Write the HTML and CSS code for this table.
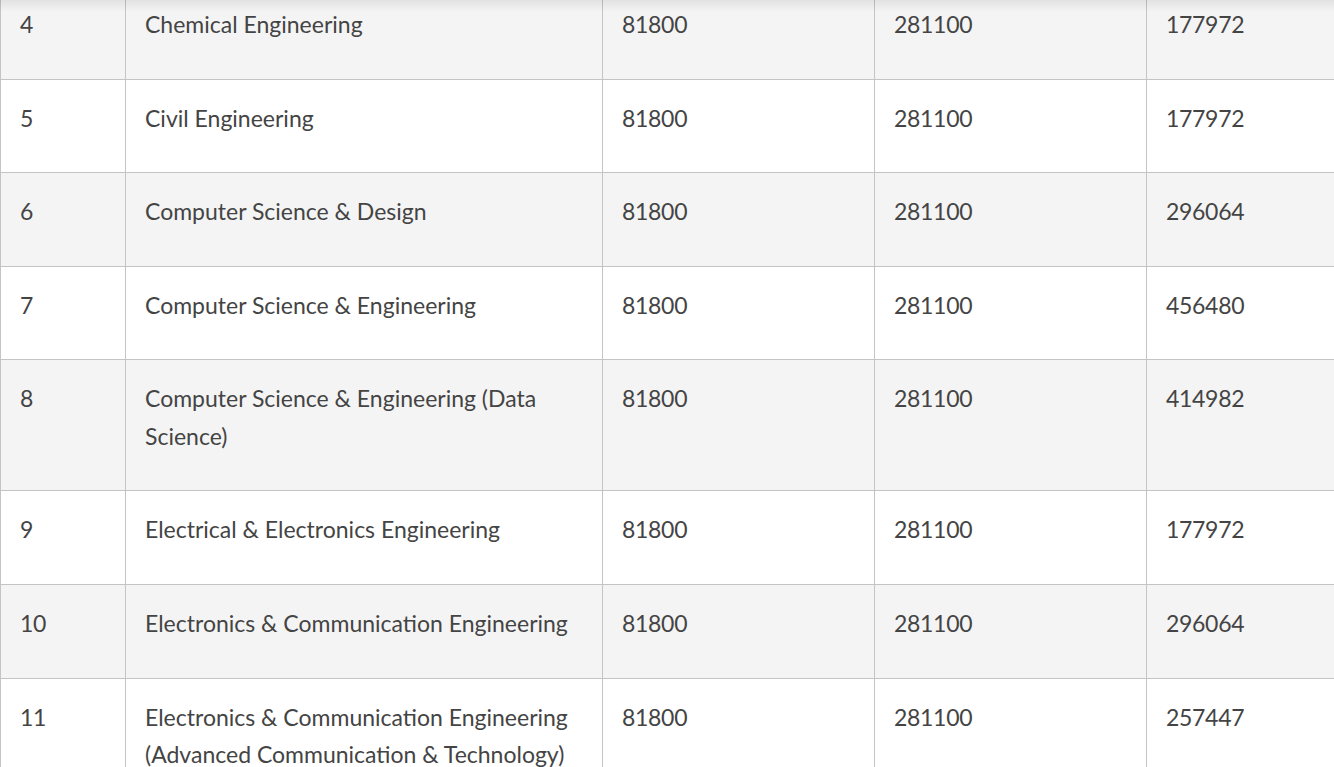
FILE: index.html
```html
<!DOCTYPE html>
<html>
<head>
<meta charset="utf-8">
<link rel="stylesheet" href="styles.css">
</head>
<body>
<div class="top-shadow"></div>
<div class="wrap">
<table class="fees">
<colgroup>
<col class="c1"><col class="c2"><col class="c3"><col class="c4"><col class="c5">
</colgroup>
<tbody>
<tr class="alt"><td>4</td><td class="name">Chemical Engineering</td><td>81800</td><td>281100</td><td>177972</td></tr>
<tr><td>5</td><td class="name">Civil Engineering</td><td>81800</td><td>281100</td><td>177972</td></tr>
<tr class="alt"><td>6</td><td class="name">Computer Science &amp; Design</td><td>81800</td><td>281100</td><td>296064</td></tr>
<tr><td>7</td><td class="name">Computer Science &amp; Engineering</td><td>81800</td><td>281100</td><td>456480</td></tr>
<tr class="alt"><td>8</td><td class="name">Computer Science &amp; Engineering (Data Science)</td><td>81800</td><td>281100</td><td>414982</td></tr>
<tr><td>9</td><td class="name">Electrical &amp; Electronics Engineering</td><td>81800</td><td>281100</td><td>177972</td></tr>
<tr class="alt"><td>10</td><td class="name">Electronics &amp; Communication Engineering</td><td>81800</td><td>281100</td><td>296064</td></tr>
<tr><td>11</td><td class="name">Electronics &amp; Communication Engineering (Advanced Communication &amp; Technology)</td><td>81800</td><td>281100</td><td>257447</td></tr>
</tbody>
</table>
</div>
</body>
</html>
```
FILE: styles.css
```css
html, body {
  margin: 0;
  padding: 0;
  background: #fff;
  overflow: hidden;
}
.wrap {
  width: 1334px;
  height: 767px;
  overflow: hidden;
}
.fees {
  margin-top: -15px;
  width: 1420px;
  border-collapse: collapse;
  table-layout: fixed;
  font-family: Lato, "Open Sans", sans-serif;
  font-size: 23px;
  line-height: 37.4px;
  letter-spacing: -0.3px;
  color: #444444;
}
.c1 { width: 125px; }
.c2 { width: 477px; }
.c3 { width: 272px; }
.c4 { width: 272px; }
.c5 { width: 274px; }
.fees td {
  border: 1px solid #c4c4c4;
  padding: 20px 19px 35.2px 19px;
  vertical-align: top;
  text-align: left;
}
.fees td.name {
  letter-spacing: 0;
}
.fees tr.alt td {
  background: #f4f4f4;
}
.top-shadow {
  position: fixed;
  left: 0;
  top: 0;
  width: 100%;
  height: 12px;
  background: linear-gradient(to bottom, rgba(0,0,0,0.07), rgba(0,0,0,0));
  pointer-events: none;
  z-index: 2;
}
```
